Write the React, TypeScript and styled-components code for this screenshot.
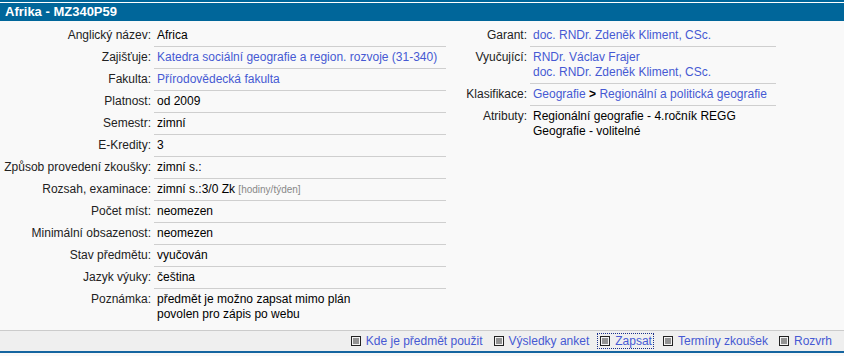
import React from 'react';
import styled, { createGlobalStyle } from 'styled-components';

const GlobalStyle = createGlobalStyle`
  body {
    margin: 0;
    background: #f9f9f9;
    font-family: "Liberation Sans", Arial, sans-serif;
    font-size: 12px;
    color: #000;
  }
`;

const Page = styled.div`
  width: 844px;
  height: 356px;
  background: #f9f9f9;
  display: flex;
  flex-direction: column;
`;

const TitleBar = styled.div`
  border-top: 2px solid #00669a;
  padding-top: 1px;
  background: #fff;
`;

const Title = styled.h1`
  margin: 0;
  height: 18px;
  line-height: 18px;
  padding-left: 5px;
  background: #00669a;
  color: #fff;
  font-size: 13px;
  font-weight: bold;
`;

const Columns = styled.div`
  display: flex;
  align-items: flex-start;
  padding-top: 4px;
  flex: 1;
`;

const InfoTable = styled.div<{ $label: number; $value: number }>`
  display: grid;
  grid-template-columns: ${p => p.$label}px ${p => p.$value}px;
`;

const Label = styled.div`
  text-align: right;
  padding: 3px 3px 3px 0;
  line-height: 15px;
  color: #222;
  white-space: nowrap;
`;

const Value = styled.div<{ $last?: boolean }>`
  padding: 3px;
  line-height: 15px;
  border-bottom: ${p => (p.$last ? 'none' : '1px solid #cfcfcf')};
  white-space: nowrap;
`;

const Link = styled.a`
  color: #4659d3;
  text-decoration: none;
  cursor: pointer;
`;

const Hint = styled.span`
  color: #888;
  font-size: 10px;
`;

const Sep = styled.b`
  color: #000;
`;

const Footer = styled.div`
  height: 20px;
  border-top: 1px solid #cbcbcb;
  border-bottom: 2px solid #1565a0;
  background: #efefef;
  display: flex;
  justify-content: flex-end;
  align-items: center;
  gap: 8px;
  padding-right: 11px;
  margin-bottom: 3px;
`;

const FooterItem = styled.a<{ $focused?: boolean }>`
  display: flex;
  align-items: center;
  gap: 5px;
  padding: 0 1px 0 2px;
  height: 14px;
  color: #4659d3;
  text-decoration: none;
  cursor: pointer;
  outline: ${p => (p.$focused ? '1px dotted #1a2f8a' : 'none')};
`;

const DocIcon = () => (
  <svg width="10" height="10" viewBox="0 0 10 10">
    <rect x="0.5" y="0.5" width="9" height="9" fill="#f4f4f4" stroke="#222" />
    <line x1="2" y1="3" x2="8" y2="3" stroke="#333" />
    <line x1="2" y1="5" x2="8" y2="5" stroke="#333" />
    <line x1="2" y1="7" x2="8" y2="7" stroke="#333" />
  </svg>
);

const leftRows: { label: string; value: React.ReactNode }[] = [
  { label: 'Anglický název:', value: 'Africa' },
  { label: 'Zajišťuje:', value: <Link>Katedra sociální geografie a region. rozvoje (31-340)</Link> },
  { label: 'Fakulta:', value: <Link>Přírodovědecká fakulta</Link> },
  { label: 'Platnost:', value: 'od 2009' },
  { label: 'Semestr:', value: 'zimní' },
  { label: 'E-Kredity:', value: '3' },
  { label: 'Způsob provedení zkoušky:', value: 'zimní s.:' },
  { label: 'Rozsah, examinace:', value: <>zimní s.:3/0 Zk <Hint>[hodiny/týden]</Hint></> },
  { label: 'Počet míst:', value: 'neomezen' },
  { label: 'Minimální obsazenost:', value: 'neomezen' },
  { label: 'Stav předmětu:', value: 'vyučován' },
  { label: 'Jazyk výuky:', value: 'čeština' },
  {
    label: 'Poznámka:',
    value: <>předmět je možno zapsat mimo plán<br />povolen pro zápis po webu</>,
  },
];

const rightRows: { label: string; value: React.ReactNode }[] = [
  { label: 'Garant:', value: <Link>doc. RNDr. Zdeněk Kliment, CSc.</Link> },
  {
    label: 'Vyučující:',
    value: <><Link>RNDr. Václav Frajer</Link><br /><Link>doc. RNDr. Zdeněk Kliment, CSc.</Link></>,
  },
  {
    label: 'Klasifikace:',
    value: <><Link>Geografie</Link> <Sep>&gt;</Sep> <Link>Regionální a politická geografie</Link></>,
  },
  { label: 'Atributy:', value: <>Regionální geografie - 4.ročník REGG<br />Geografie - volitelné</> },
];

const links = ['Kde je předmět použit', 'Výsledky anket', 'Zapsat', 'Termíny zkoušek', 'Rozvrh'];

const App: React.FC = () => {
  const renderRows = (rows: { label: string; value: React.ReactNode }[]) =>
    rows.map((row, i) => (
      <React.Fragment key={row.label}>
        <Label>{row.label}</Label>
        <Value $last={i === rows.length - 1}>{row.value}</Value>
      </React.Fragment>
    ));

  return (
    <Page>
      <GlobalStyle />
      <TitleBar>
        <Title>Afrika - MZ340P59</Title>
      </TitleBar>
      <Columns>
        <InfoTable $label={154} $value={292}>{renderRows(leftRows)}</InfoTable>
        <InfoTable $label={84} $value={246}>{renderRows(rightRows)}</InfoTable>
      </Columns>
      <Footer>
        {links.map(l => (
          <FooterItem key={l} $focused={l === 'Zapsat'}>
            <DocIcon />
            {l}
          </FooterItem>
        ))}
      </Footer>
    </Page>
  );
};

export default App;
